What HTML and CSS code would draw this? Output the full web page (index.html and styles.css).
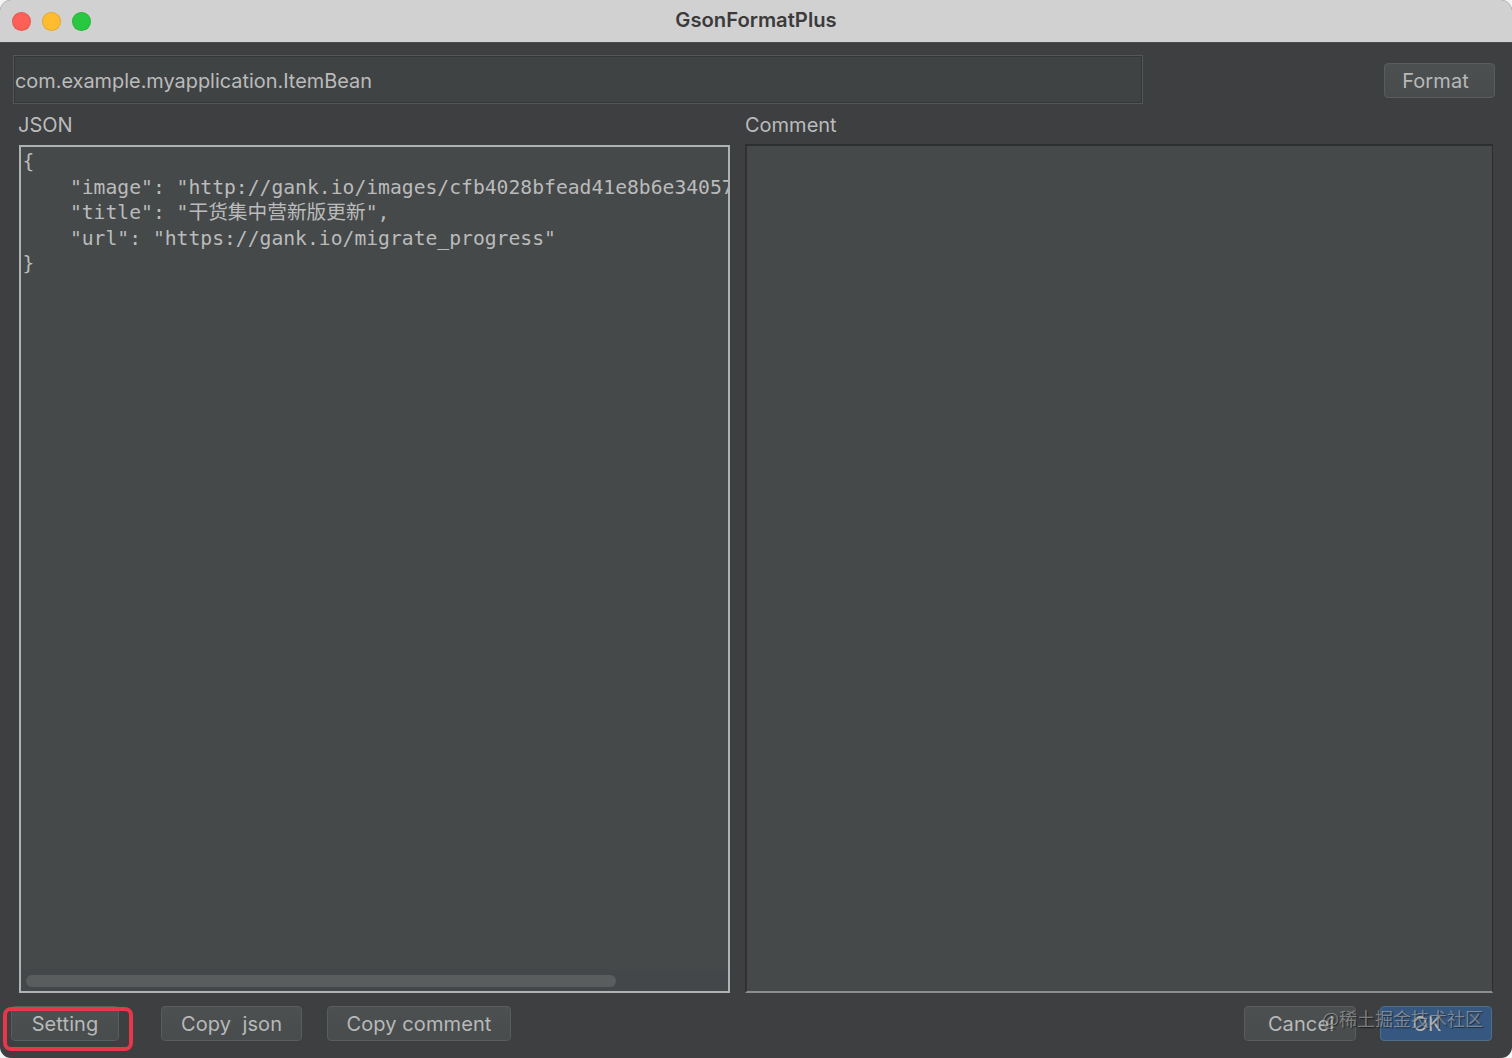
FILE: index.html
```html
<!DOCTYPE html>
<html lang="zh">
<head>
<meta charset="utf-8">
<title>GsonFormatPlus</title>
<link rel="stylesheet" href="styles.css">
</head>
<body>
<div class="window">
  <header class="titlebar">
    <div class="lights">
      <span class="light red"></span>
      <span class="light yellow"></span>
      <span class="light green"></span>
    </div>
    <div class="title">GsonFormatPlus</div>
  </header>
  <main class="content">
    <div class="top-row">
      <div class="class-field">com.example.myapplication.ItemBean</div>
      <button class="btn btn-format">Format</button>
    </div>
    <div class="panels">
      <section class="panel panel-json">
        <div class="panel-label">JSON</div>
        <div class="editor editor-json">
          <pre class="code">{
    "image": "http://gank.io/images/cfb4028bfead41e8b6e34057364969d1",
    "title": "干货集中营新版更新",
    "url": "https://gank.io/migrate_progress"
}</pre>
          <div class="scrolltrack"><div class="scrollthumb"></div></div>
        </div>
      </section>
      <section class="panel panel-comment">
        <div class="panel-label">Comment</div>
        <div class="editor editor-comment"></div>
      </section>
    </div>
    <div class="bottom-row">
      <button class="btn btn-setting">Setting</button>
      <button class="btn btn-copyjson">Copy&nbsp; json</button>
      <button class="btn btn-copycomment">Copy comment</button>
      <div class="spacer"></div>
      <button class="btn btn-cancel">Cancel</button>
      <button class="btn btn-ok">OK</button>
    </div>
  </main>
  <div class="highlight"></div>
  <div class="watermark">@稀土掘金技术社区</div>
</div>
</body>
</html>
```
FILE: styles.css
```css
* { box-sizing: border-box; }
html, body { margin: 0; padding: 0; background: #f4f4f4; }
body { width: 1512px; height: 1058px; overflow: hidden; }
.window {
  position: relative;
  width: 1512px;
  height: 1058px;
  display: flex;
  flex-direction: column;
  background: #3d3f41;
  border-radius: 11px;
  overflow: hidden;
  font-family: Inter, "Liberation Sans", sans-serif;
  color: #bbbbbb;
}
.titlebar {
  position: relative;
  flex: 0 0 43px;
  display: flex;
  align-items: center;
  justify-content: center;
  background: #d2d1d2;
  border-bottom: 1px solid #4a4b4c;
}
.lights {
  position: absolute;
  left: 12px;
  top: 12px;
  display: flex;
  gap: 11px;
}
.light {
  width: 19px;
  height: 19px;
  border-radius: 50%;
  border: 1px solid rgba(0,0,0,.1);
}
.red { background: #fe5f57; }
.yellow { background: #febc2e; }
.green { background: #28c840; }
.title {
  font-size: 20.2px;
  font-weight: 600;
  color: #3b3b3b;
  padding-bottom: 4px;
}
.content {
  flex: 1;
  display: flex;
  flex-direction: column;
  padding: 12px 17px 17px 13px;
  min-height: 0;
}
.top-row {
  display: flex;
  align-items: center;
  justify-content: space-between;
  height: 49px;
}
.class-field {
  width: 1130px;
  height: 49px;
  padding: 2px 0 0 1px;
  display: flex;
  align-items: center;
  font-size: 19.9px;
  background: #404344;
  border: 1px solid #54575a;
  box-shadow: inset 0 0 0 1px #343638;
}
.btn {
  height: 35px;
  padding: 0;
  font-family: inherit;
  font-size: 20px;
  color: #b8b9b9;
  background: linear-gradient(#4c5051, #484c4d);
  border: 1px solid #5a5d5f;
  border-radius: 4px;
  letter-spacing: .1px;
}
.btn-format { width: 111px; margin-top: 1px; padding: 2px 8px 0 0; }
.panels {
  flex: 1;
  display: flex;
  min-height: 0;
  margin-top: 9px;
  padding-left: 6px;
}
.panel { display: flex; flex-direction: column; min-width: 0; }
.panel-json { width: 711px; margin-right: 15px; }
.panel-comment { width: 748px; }
.panel-label {
  height: 32px;
  font-size: 20px;
  line-height: 24px;
  margin-left: -1px;
}
.panel-comment .panel-label { margin-left: 0; }
.editor {
  flex: 1;
  position: relative;
  overflow: hidden;
  background: #45494a;
}
.editor-json { border: 2px solid #b0b1b1; }
.editor-comment {
  margin-top: -1px;
  border-top: 2px solid #2c2e30;
  border-left: 2px solid #2f3133;
  border-right: 1px solid #2b2d2f;
  border-bottom: 2px solid #8c8e8e;
}
.code {
  margin: 0;
  padding: 2px 0 0 1.5px;
  font-family: "DejaVu Sans Mono", "Noto Sans CJK SC", monospace;
  font-size: 19.7px;
  line-height: 25.5px;
  color: #bbbbbb;
  white-space: pre;
}
.scrolltrack {
  position: absolute;
  left: 0;
  right: 0;
  bottom: 0;
  height: 22px;
  padding: 6px 0 4px 5px;
  background: #43474a;
}
.scrollthumb {
  width: 590px;
  height: 12px;
  border-radius: 6px;
  background: #5a5d5e;
}
.bottom-row {
  display: flex;
  align-items: center;
  height: 35px;
  margin-top: 13px;
  margin-left: -2px;
  margin-right: 3px;
}
.btn-setting { width: 108px; margin-right: 42px; }
.btn-copyjson { width: 141px; margin-right: 25px; }
.btn-copycomment { width: 184px; }
.spacer { flex: 1; }
.btn-cancel { width: 112px; margin-right: 24px; padding-left: 2px; }
.btn-ok {
  width: 112px;
  background: #365880;
  border-color: #4c708c;
  padding-right: 18px;
}
.highlight {
  position: absolute;
  left: 3px;
  top: 1007px;
  width: 130px;
  height: 44px;
  border: 4px solid #e8364a;
  border-radius: 8px;
}
.watermark {
  position: absolute;
  right: 29px;
  top: 1005px;
  font-family: "Noto Sans CJK SC", sans-serif;
  font-size: 18px;
  line-height: 26px;
  color: rgba(190,190,190,.55);
  text-shadow: 1px 1px 1px rgba(0,0,0,.5);
}
```
